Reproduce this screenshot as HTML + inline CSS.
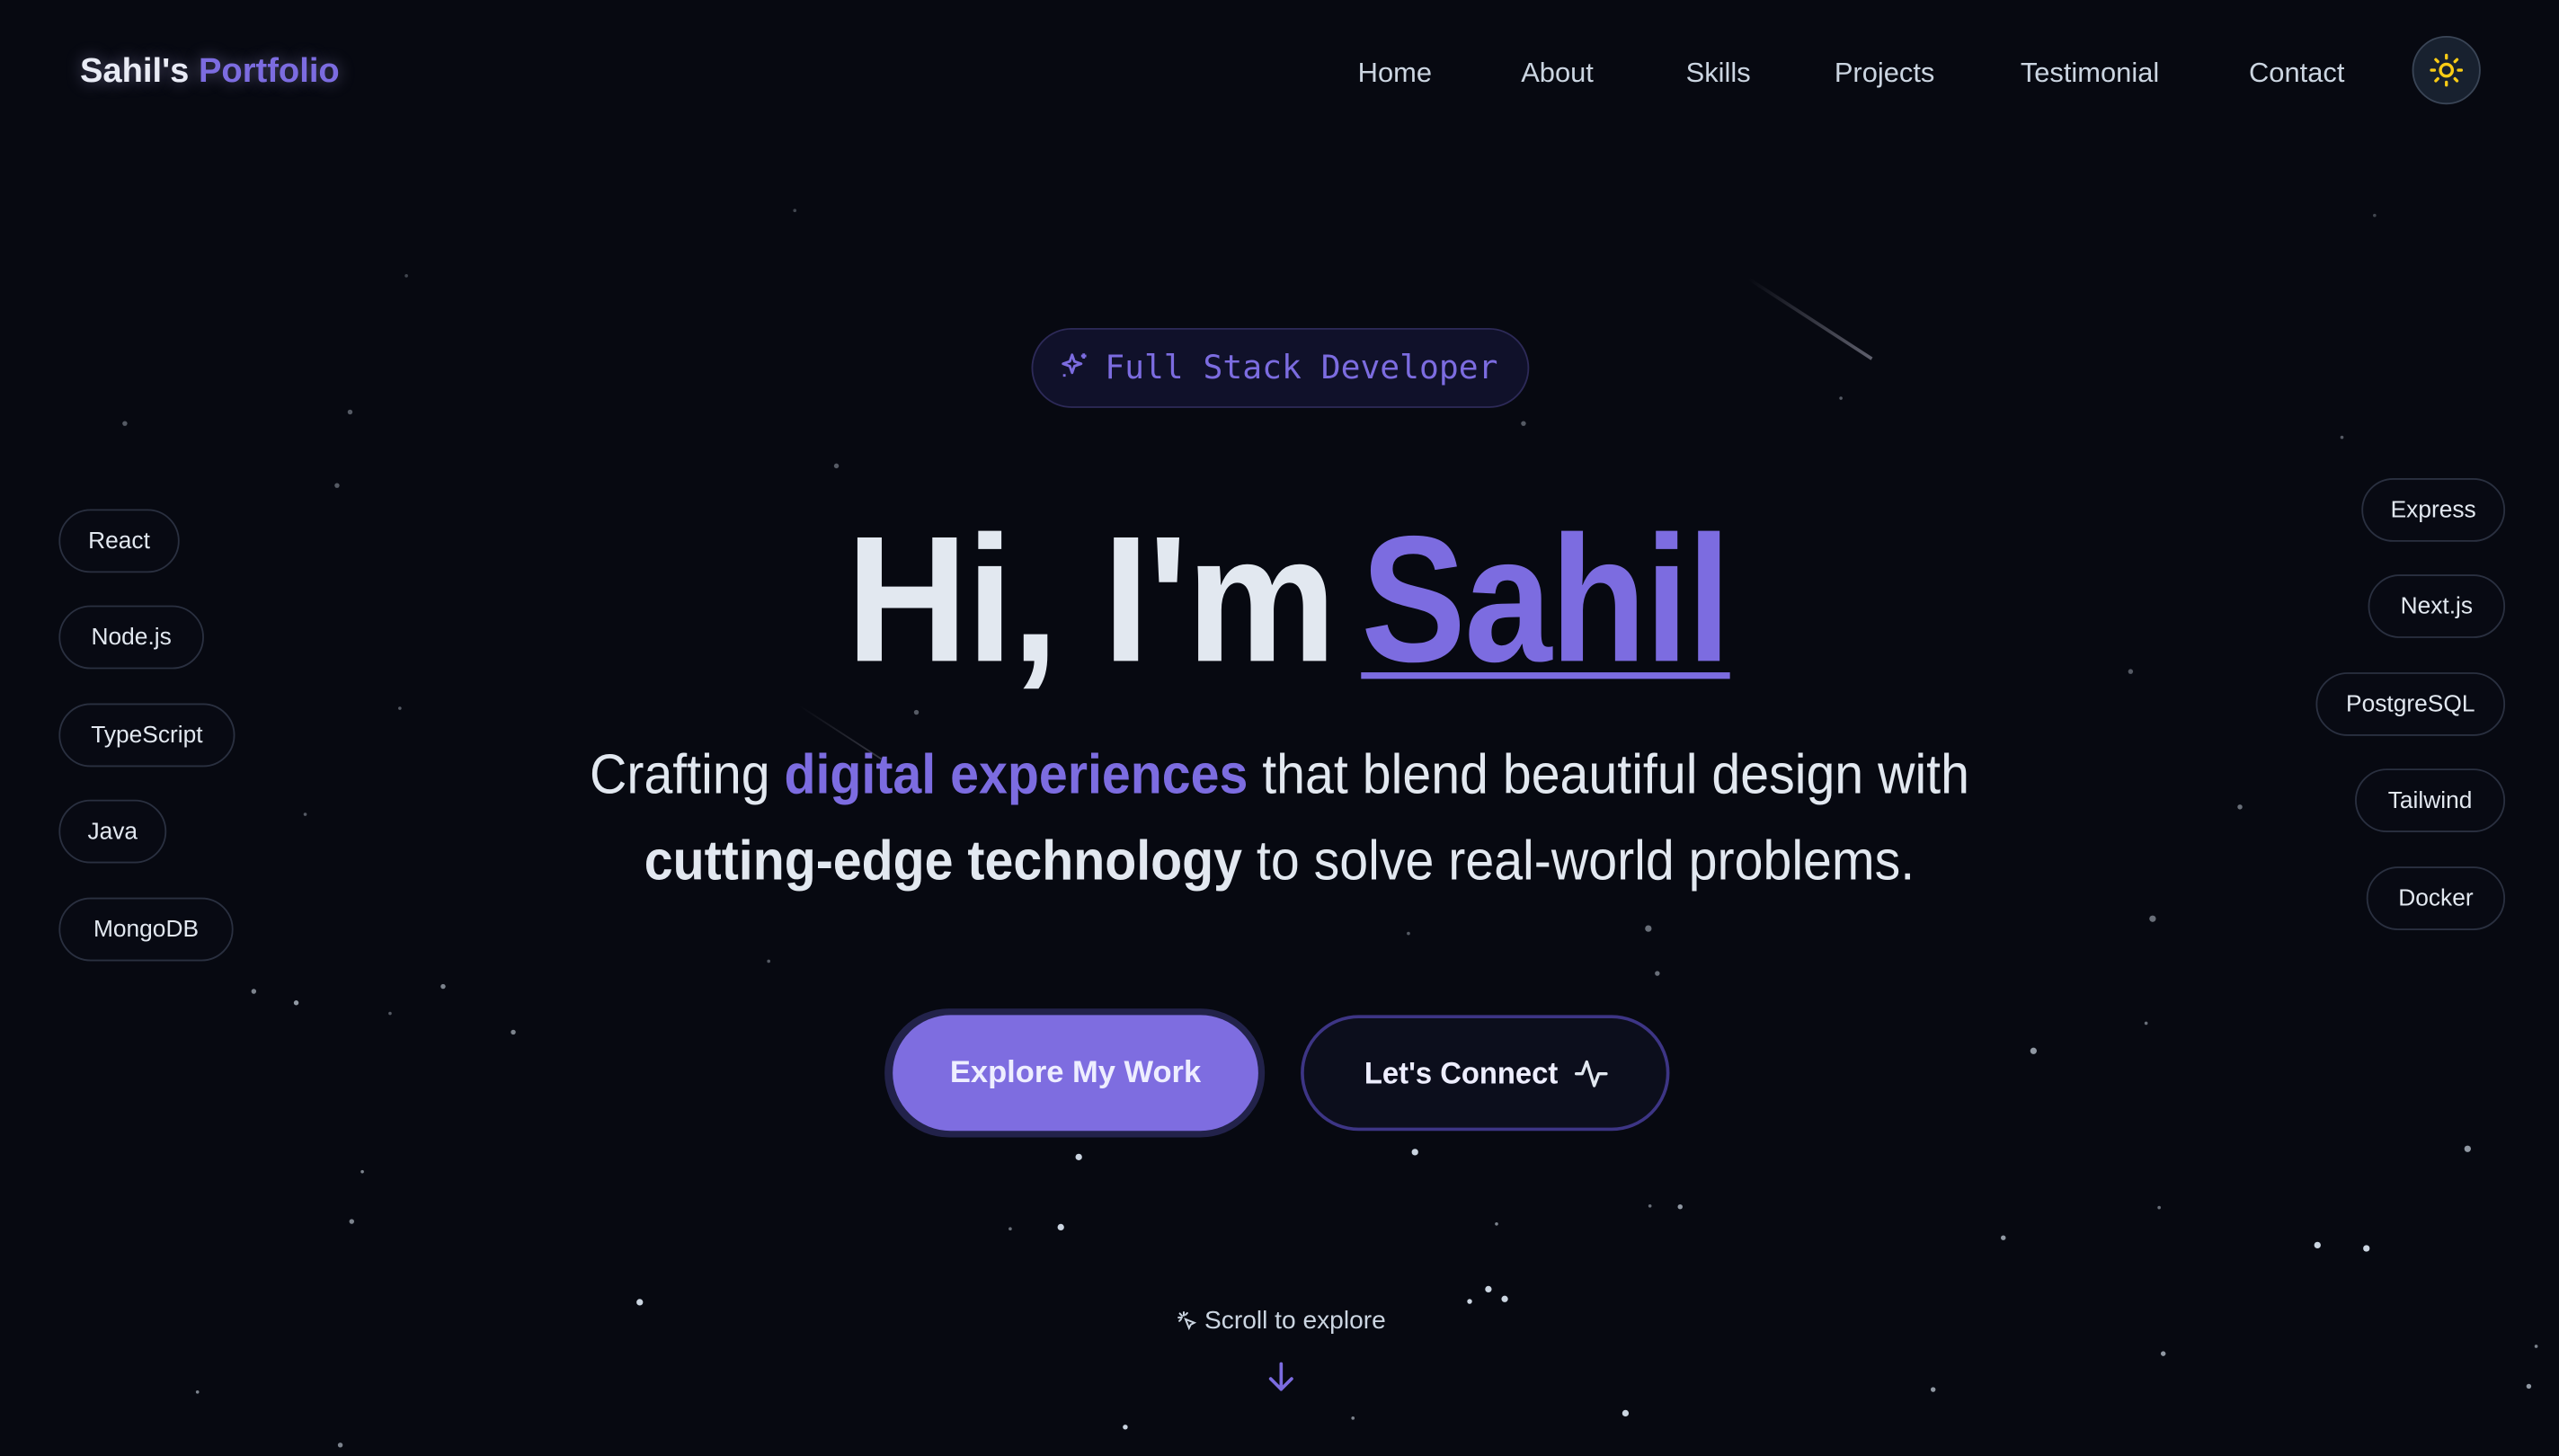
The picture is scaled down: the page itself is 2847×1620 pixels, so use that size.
<!DOCTYPE html>
<html><head><meta charset="utf-8"><style>
html,body{margin:0;padding:0;width:2847px;height:1620px;overflow:hidden;background:#070911;}
#w{position:absolute;left:0;top:0;width:1568px;height:892px;transform:scale(1.81569);transform-origin:0 0;font-family:"Liberation Sans",sans-serif;background:#070911;overflow:hidden}
.a{position:absolute}
.nav{position:absolute;top:35px;font-size:17px;color:#cbd5e1}
.pill{position:absolute;height:37px;border:1px solid #2a3040;border-radius:20px;color:#e2e8f0;font-size:14.5px;line-height:39px;text-align:center;background:#080a13}
.s{position:absolute;border-radius:50%;background:#cbd5e1}
</style></head><body><div id="w">
<div class="a" style="left:1072px;top:170px;width:90px;height:2px;background:linear-gradient(90deg,rgba(255,255,255,0),rgba(200,200,220,.45));transform:rotate(33deg);transform-origin:0 0"></div>
<div class="a" style="left:490px;top:432px;width:60px;height:1px;background:linear-gradient(90deg,rgba(255,255,255,0),rgba(200,200,220,.25));transform:rotate(33deg);transform-origin:0 0"></div>

<div class="a" style="left:49px;top:32px;font-size:21px;font-weight:bold;color:#e9ebf5;text-shadow:0 0 10px rgba(200,190,255,.4)">Sahil's <span style="color:#7c6ce0">Portfolio</span></div>
<div class="nav" style="left:832px">Home</div>
<div class="nav" style="left:932px">About</div>
<div class="nav" style="left:1033px">Skills</div>
<div class="nav" style="left:1124px">Projects</div>
<div class="nav" style="left:1238px">Testimonial</div>
<div class="nav" style="left:1378px">Contact</div>
<div class="a" style="left:1478px;top:22px;width:40px;height:40px;border-radius:50%;background:#18212f;border:1px solid #3a4556"></div>
<svg class="a" style="left:1488px;top:32px" width="22" height="22" viewBox="0 0 24 24" fill="none" stroke="#facc15" stroke-width="2" stroke-linecap="round"><circle cx="12" cy="12" r="4"/><path d="M12 2v2M12 20v2M4.9 4.9l1.4 1.4M17.7 17.7l1.4 1.4M2 12h2M20 12h2M4.9 19.1l1.4-1.4M17.7 6.3l1.4-1.4"/></svg>

<div class="a" style="left:632px;top:201px;width:303px;height:47px;border:1px solid #2d2a58;border-radius:25px;background:#10112a"></div>
<svg class="a" style="left:649px;top:215px" width="19" height="19" viewBox="0 0 24 24" fill="none" stroke="#7c6ce0" stroke-width="2" stroke-linejoin="round"><path d="M10 3l1.8 5.2L17 10l-5.2 1.8L10 17l-1.8-5.2L3 10l5.2-1.8z"/><path d="M19 2v4M17 4h4M4 18v2M3 19h2"/></svg>
<div class="a" style="left:677px;top:213px;font-family:'DejaVu Sans Mono','Liberation Mono',monospace;font-size:20px;color:#7c6ce0;transform:scaleX(1.0);transform-origin:0 0">Full Stack Developer</div>

<div class="a" style="left:318px;width:500px;top:308px;text-align:right;font-size:110px;font-weight:bold;color:#e2e8f0;line-height:120px;letter-spacing:-1px;transform:scaleX(0.94);transform-origin:100% 0">Hi, I'm</div>
<div class="a" style="left:834px;top:308px;font-size:110px;font-weight:bold;color:#7c6ce0;line-height:120px;letter-spacing:-1px;transform:scaleX(0.875);transform-origin:0 0">Sahil</div>
<div class="a" style="left:834px;top:412px;width:226px;height:4px;background:#7c6ce0"></div>

<div class="a" style="left:0;width:1568px;top:449px;text-align:center;font-size:34px;color:#e2e8f0;line-height:53px;transform:scaleX(0.928);transform-origin:784px 0">Crafting <b style="color:#7c6ce0">digital experiences</b> that blend beautiful design with<br><b>cutting-edge technology</b> to solve real-world problems.</div>

<div class="a" style="left:542px;top:618px;width:233px;height:79px;border-radius:40px;background:#22224a"></div>
<div class="a" style="left:547px;top:622px;width:224px;height:71px;border-radius:36px;background:#7e6de0;color:#eef;font-size:19px;font-weight:bold;line-height:72px;text-align:center">Explore My Work</div>
<div class="a" style="left:797px;top:622px;width:222px;height:67px;border-radius:36px;border:2px solid #3d3585;background:#0c0e1c;color:#eef;font-size:19px;font-weight:bold;line-height:70px"><span style="margin-left:37px;display:inline-block;transform:scaleX(0.95);transform-origin:0 0">Let's Connect</span></div>
<svg class="a" style="left:964px;top:647px" width="22" height="22" viewBox="0 0 24 24" fill="none" stroke="#e2e8f0" stroke-width="2" stroke-linecap="round" stroke-linejoin="round"><path d="M2 12h4l3-8 5 16 3-8h5"/></svg>

<svg class="a" style="left:721px;top:803px" width="13" height="13" viewBox="0 0 24 24" fill="none" stroke="#cbd5e1" stroke-width="2" stroke-linecap="round"><path d="M10 10l10 4-4 2-2 4z"/><path d="M8 2v4M2 8h4M3.5 3.5l2.5 2.5M12 3l-2 2M3 12l2-2"/></svg>
<div class="a" style="left:738px;top:801px;font-size:15.5px;color:#cbd5e1">Scroll to explore</div>
<svg class="a" style="left:774px;top:833px" width="22" height="22" viewBox="0 0 24 24" fill="none" stroke="#7c6ce0" stroke-width="2.2" stroke-linecap="round" stroke-linejoin="round"><path d="M12 3v17M5 13l7 7 7-7"/></svg>

<div class="pill" style="left:36px;top:312px;width:72px">React</div>
<div class="pill" style="left:36px;top:371px;width:87px">Node.js</div>
<div class="pill" style="left:36px;top:431px;width:106px">TypeScript</div>
<div class="pill" style="left:36px;top:490px;width:64px">Java</div>
<div class="pill" style="left:36px;top:550px;width:105px">MongoDB</div>
<div class="pill" style="left:1447px;top:293px;width:86px">Express</div>
<div class="pill" style="left:1451px;top:352px;width:82px">Next.js</div>
<div class="pill" style="left:1419px;top:412px;width:114px">PostgreSQL</div>
<div class="pill" style="left:1443px;top:471px;width:90px">Tailwind</div>
<div class="pill" style="left:1450px;top:531px;width:83px">Docker</div>

<div class="s" style="left:390px;top:796px;width:4px;height:4px"></div>
<div class="s" style="left:659px;top:707px;width:4px;height:4px"></div>
<div class="s" style="left:648px;top:750px;width:4px;height:4px"></div>
<div class="s" style="left:865px;top:704px;width:4px;height:4px"></div>
<div class="s" style="left:910px;top:788px;width:4px;height:4px"></div>
<div class="s" style="left:920px;top:794px;width:4px;height:4px"></div>
<div class="s" style="left:899px;top:796px;width:3px;height:3px"></div>
<div class="s" style="left:994px;top:864px;width:4px;height:4px"></div>
<div class="s" style="left:688px;top:873px;width:3px;height:3px"></div>
<div class="s" style="left:1244px;top:642px;width:4px;height:4px;opacity:.7"></div>
<div class="s" style="left:1418px;top:761px;width:4px;height:4px"></div>
<div class="s" style="left:1448px;top:763px;width:4px;height:4px"></div>
<div class="s" style="left:1510px;top:702px;width:4px;height:4px;opacity:.7"></div>
<div class="s" style="left:1226px;top:757px;width:3px;height:3px;opacity:.7"></div>
<div class="s" style="left:1028px;top:738px;width:3px;height:3px;opacity:.7"></div>
<div class="s" style="left:1008px;top:567px;width:4px;height:4px;opacity:.5"></div>
<div class="s" style="left:1014px;top:595px;width:3px;height:3px;opacity:.5"></div>
<div class="s" style="left:1317px;top:561px;width:4px;height:4px;opacity:.5"></div>
<div class="s" style="left:1371px;top:493px;width:3px;height:3px;opacity:.5"></div>
<div class="s" style="left:180px;top:613px;width:3px;height:3px;opacity:.7"></div>
<div class="s" style="left:154px;top:606px;width:3px;height:3px;opacity:.6"></div>
<div class="s" style="left:270px;top:603px;width:3px;height:3px;opacity:.6"></div>
<div class="s" style="left:313px;top:631px;width:3px;height:3px;opacity:.6"></div>
<div class="s" style="left:214px;top:747px;width:3px;height:3px;opacity:.6"></div>
<div class="s" style="left:221px;top:717px;width:2px;height:2px;opacity:.6"></div>
<div class="s" style="left:120px;top:852px;width:2px;height:2px;opacity:.6"></div>
<div class="s" style="left:207px;top:884px;width:3px;height:3px;opacity:.6"></div>
<div class="s" style="left:1183px;top:850px;width:3px;height:3px;opacity:.7"></div>
<div class="s" style="left:1324px;top:828px;width:3px;height:3px;opacity:.7"></div>
<div class="s" style="left:1548px;top:848px;width:3px;height:3px;opacity:.7"></div>
<div class="s" style="left:1553px;top:824px;width:2px;height:2px;opacity:.6"></div>
<div class="s" style="left:916px;top:749px;width:2px;height:2px;opacity:.6"></div>
<div class="s" style="left:828px;top:868px;width:2px;height:2px;opacity:.6"></div>
<div class="s" style="left:205px;top:296px;width:3px;height:3px;opacity:.4"></div>
<div class="s" style="left:75px;top:258px;width:3px;height:3px;opacity:.4"></div>
<div class="s" style="left:213px;top:251px;width:3px;height:3px;opacity:.4"></div>
<div class="s" style="left:511px;top:284px;width:3px;height:3px;opacity:.4"></div>
<div class="s" style="left:932px;top:258px;width:3px;height:3px;opacity:.4"></div>
<div class="s" style="left:1304px;top:410px;width:3px;height:3px;opacity:.4"></div>
<div class="s" style="left:560px;top:435px;width:3px;height:3px;opacity:.4"></div>
<div class="s" style="left:186px;top:498px;width:2px;height:2px;opacity:.4"></div>
<div class="s" style="left:244px;top:433px;width:2px;height:2px;opacity:.4"></div>
<div class="s" style="left:1314px;top:626px;width:2px;height:2px;opacity:.5"></div>
<div class="s" style="left:1322px;top:739px;width:2px;height:2px;opacity:.5"></div>
<div class="s" style="left:1010px;top:738px;width:2px;height:2px;opacity:.5"></div>
<div class="s" style="left:618px;top:752px;width:2px;height:2px;opacity:.5"></div>
<div class="s" style="left:470px;top:588px;width:2px;height:2px;opacity:.4"></div>
<div class="s" style="left:862px;top:571px;width:2px;height:2px;opacity:.4"></div>
<div class="s" style="left:238px;top:620px;width:2px;height:2px;opacity:.4"></div>
<div class="s" style="left:1434px;top:267px;width:2px;height:2px;opacity:.4"></div>
<div class="s" style="left:1127px;top:243px;width:2px;height:2px;opacity:.4"></div>
<div class="s" style="left:1454px;top:131px;width:2px;height:2px;opacity:.3"></div>
<div class="s" style="left:486px;top:128px;width:2px;height:2px;opacity:.3"></div>
<div class="s" style="left:248px;top:168px;width:2px;height:2px;opacity:.3"></div>
</div></body></html>
